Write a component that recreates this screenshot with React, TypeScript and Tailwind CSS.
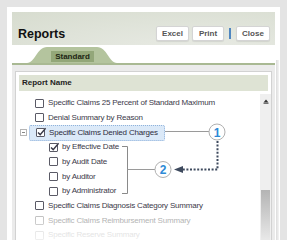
import { type FC } from 'react'

const font = "font-['Liberation_Sans',Arial,sans-serif]"

interface IRowProps {
  readonly label: string
  readonly level?: 0 | 1
  readonly checked?: boolean
  readonly tone?: 'normal' | 'faded' | 'ghost'
}

const Box: FC<{ checked?: boolean, tone?: string }> = ({ checked, tone }) => (
  <span
    className={`relative w-[9px] h-[9px] shrink-0 bg-white border rounded-[1px] ${tone === 'ghost' ? 'border-[#d6d6d6]' : tone === 'faded' ? 'border-[#bdbdbd]' : 'border-[#5a5a66]'}`}
  >
    {checked && (
      <svg viewBox="0 0 11 11" className="absolute -top-[3px] -left-[1px] w-[11px] h-[11px]">
        <path d="M2 6.4 L4.2 8.6 L9.6 2.2" fill="none" stroke="#3a3a48" strokeWidth="1.4"/>
      </svg>
    )}
  </span>
)

const Row: FC<IRowProps> = ({ label, level = 0, checked, tone = 'normal' }) => (
  <div className={`h-[14.67px] flex items-center gap-[4px] ${level ? 'pl-[30px]' : 'pl-[16px]'}`}>
    <Box checked={checked} tone={tone}/>
    <span
      className={`whitespace-nowrap text-[8px] tracking-[-0.2px] ${tone === 'ghost' ? 'text-[#c8c8c8]' : tone === 'faded' ? 'text-[#a4a4a4]' : 'text-[#3c3a4a]'}`}
    >
      {label}
    </span>
  </div>
)

const HeadButton: FC<{ label: string, width: string }> = ({ label, width }) => (
  <button
    className={`${width} h-[15px] bg-white border border-[#d4d4d4] rounded-[2px] shadow-[0_1px_1px_rgba(0,0,0,0.08)] text-[8px] font-bold text-[#555] flex items-center justify-center`}
  >
    {label}
  </button>
)

const App: FC = () => {
  return (
    <div className={`relative w-[287px] h-[240px] overflow-hidden bg-[#e4e4e4] ${font}`}>
      <div className="h-full pt-[7px] px-[7px]">
        <div className="h-full bg-white px-[5px] pt-[5px] flex flex-col">
          {/* header */}
          <div className="h-[33px] shrink-0 bg-[radial-gradient(ellipse_at_70%_120%,#e9ebe5_0%,#dfe3d9_55%,#d7dccf_100%)] flex items-end justify-between pl-[6px] pr-[5px] pb-[4px]">
            <h1 className="text-[12.5px] font-bold text-[#111] leading-none pb-[1px]">Reports</h1>
            <div className="flex items-center gap-[3px]">
              <HeadButton label="Excel" width="w-[33px]"/>
              <HeadButton label="Print" width="w-[32px]"/>
              <span className="w-[2px] h-[11px] bg-[#4f86c0] mx-[2px]"/>
              <HeadButton label="Close" width="w-[34px]"/>
            </div>
          </div>

          {/* tabs */}
          <div className="relative h-[20px] shrink-0 border-b-2 border-[#a9b993]">
            <svg viewBox="0 0 90 16" className="absolute left-[15px] bottom-0 w-[90px] h-[16px]" preserveAspectRatio="none">
              <path d="M0 16 C8 16 10 0 20 0 L70 0 C80 0 82 16 90 16 Z" fill="#b4c49e"/>
            </svg>
            <div className="absolute left-[39px] bottom-[1px] w-[43px] h-[11px] bg-[#93a779] flex items-center justify-center">
              <span className="text-[8px] font-bold text-[#1d2614]">Standard</span>
            </div>
          </div>

          {/* list */}
          <div className="flex-1 bg-[#ebebeb] pt-[6px] px-[3px]">
            <div className="h-full bg-white border border-[#d2d2d2] flex flex-col">
              <div className="mx-[3px] mt-[3px] h-[16px] bg-[#dee3d4] flex items-center pl-[3px]">
                <span className="text-[8px] font-bold text-[#222]">Report Name</span>
              </div>
              <div className="relative flex-1 flex pt-[3px]">
                <div className="relative flex-1 pl-[3px] pt-[2px] overflow-hidden">
                  <Row label="Specific Claims 25 Percent of Standard Maximum"/>
                  <Row label="Denial Summary by Reason"/>
                  <div className="relative h-[14.67px] flex items-center">
                    <span className="absolute left-[1px] w-[7px] h-[7px] border border-[#b5b5b5] bg-white flex items-center justify-center">
                      <span className="w-[3px] h-[1px] bg-[#888]"/>
                    </span>
                    <div className="ml-[10px] h-[16px] w-[136px] rounded-[2px] border border-dotted border-[#8fb2db] bg-[#dbe9f8] flex items-center gap-[4px] pl-[6px]">
                      <Box checked/>
                      <span className="whitespace-nowrap text-[8px] tracking-[-0.2px] text-[#2e2c3c]">Specific Claims Denied Charges</span>
                    </div>
                  </div>
                  <Row label="by Effective Date" level={1} checked/>
                  <Row label="by Audit Date" level={1}/>
                  <Row label="by Auditor" level={1}/>
                  <Row label="by Administrator" level={1}/>
                  <Row label="Specific Claims Diagnosis Category Summary"/>
                  <Row label="Specific Claims Reimbursement Summary" tone="faded"/>
                  <Row label="Specific Reserve Summary" tone="ghost"/>
                  <div className="absolute inset-x-0 bottom-0 h-[30px] bg-gradient-to-b from-white/0 to-white/70"/>
                </div>
                {/* scrollbar */}
                <div className="w-[11px] bg-[#efefef] flex flex-col items-center pt-[5px]">
                  <svg viewBox="0 0 6 5" className="w-[6px] h-[5px]">
                    <path d="M3 0.5 L5.5 3.5 L0.5 3.5 Z" fill="#333"/>
                    <rect x="0.5" y="3.8" width="5" height="1" fill="#555"/>
                  </svg>
                  <div className="mt-auto w-[9px] h-[53px] bg-gradient-to-b from-[#b4b4b4] to-[#ececec]"/>
                </div>
              </div>
            </div>
          </div>
        </div>
      </div>

      {/* right edge stripes */}
      <div className="absolute top-[60px] bottom-0 right-[8px] w-[3px] bg-gradient-to-r from-[#dcdcdc] to-[#f4f4f4]"/>

      {/* annotations */}
      <svg className="absolute inset-0 w-[287px] h-[240px] pointer-events-none" viewBox="0 0 287 240">
        <line x1="165" y1="131.5" x2="209" y2="131.5" stroke="#9a9a9a" strokeWidth="1"/>
        <path d="M122 146.5 H127.5 V193.5 H122" fill="none" stroke="#8a8a8a" strokeWidth="1"/>
        <line x1="127.5" y1="169.5" x2="155" y2="169.5" stroke="#9a9a9a" strokeWidth="1"/>
        <path d="M217.5 141 V169.5 H181" fill="none" stroke="#3e4a5e" strokeWidth="2" strokeDasharray="2 1.6"/>
        <path d="M174 169.5 L183 166 L183 173 Z" fill="#3e4a5e"/>
        <circle cx="217" cy="132" r="8" fill="white" stroke="#b0b0b0" strokeWidth="1"/>
        <text x="217" y="136.5" textAnchor="middle" fontSize="12" fontWeight="bold" fill="#2e8ad6" fontFamily="'Liberation Sans Narrow','Liberation Sans',sans-serif">1</text>
        <circle cx="163" cy="169.5" r="8" fill="white" stroke="#b0b0b0" strokeWidth="1"/>
        <text x="163" y="174" textAnchor="middle" fontSize="12" fontWeight="bold" fill="#2e8ad6" fontFamily="'Liberation Sans Narrow','Liberation Sans',sans-serif">2</text>
      </svg>
    </div>
  )
}

export default App
